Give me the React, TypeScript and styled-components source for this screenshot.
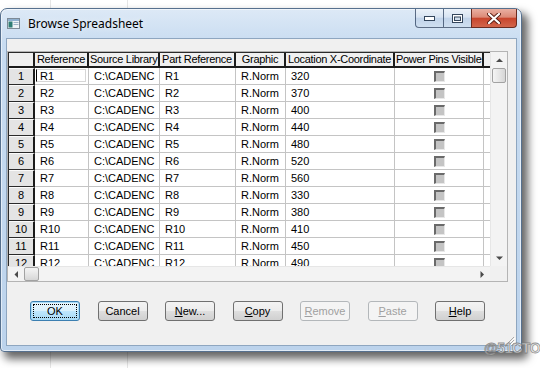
import React from 'react';
import styled, { createGlobalStyle, css } from 'styled-components';

const GlobalStyle = createGlobalStyle`
  html, body {
    margin: 0;
    padding: 0;
    background: #fff;
  }
  body {
    font-family: 'Liberation Sans', Arial, sans-serif;
  }
`;

const Desktop = styled.div`
  position: relative;
  width: 540px;
  height: 368px;
  overflow: hidden;
  box-sizing: border-box;
  padding-top: 8px;
  background-color: #fff;
  background-image: linear-gradient(#e6e6e6, #e6e6e6), linear-gradient(#e6e6e6, #e6e6e6);
  background-size: 1px 100%, 1px 100%;
  background-position: 50px 0, 127px 0;
  background-repeat: no-repeat;
`;

const Window = styled.div`
  width: 522px;
  height: 344px;
  box-sizing: border-box;
  display: flex;
  flex-direction: column;
  border: 1px solid #56708e;
  border-radius: 7px 7px 4px 4px;
  background: linear-gradient(180deg, #dde9f6 0%, #c8dcf1 10%, #bcd3ec 100%);
  box-shadow: 5px 6px 9px 1px rgba(0, 0, 0, 0.6), inset 0 0 0 1px rgba(255, 255, 255, 0.55);
`;

const TitleBar = styled.div`
  height: 29px;
  display: flex;
  align-items: center;
  padding-left: 6px;
`;

const TitleText = styled.span`
  margin-left: 8px;
  font-family: 'Noto Sans', 'Liberation Sans', sans-serif;
  font-size: 12px;
  color: #000;
  text-shadow: 0 0 6px rgba(255, 255, 255, 0.9);
`;

const CaptionGroup = styled.div`
  margin-left: auto;
  margin-right: 4px;
  align-self: flex-start;
  display: flex;
`;

const CaptionButton = styled.div<{ $kind: 'min' | 'max' | 'close' }>`
  height: 19px;
  box-sizing: border-box;
  display: flex;
  align-items: center;
  justify-content: center;
  border: 1px solid rgba(45, 65, 95, 0.75);
  border-top: none;
  ${(p) =>
    p.$kind === 'close'
      ? css`
          width: 46px;
          border-color: #6b2b1f;
          border-bottom-right-radius: 4px;
          background: linear-gradient(180deg, #eab0a2 0%, #dc8a77 45%, #c8462d 52%, #d2654b 100%);
        `
      : css`
          width: 28px;
          border-right: none;
          background: linear-gradient(180deg, #ecf2f9 0%, #d8e4f2 45%, #c2d4ea 52%, #cfdff0 100%);
        `}
  ${(p) =>
    p.$kind === 'min' &&
    css`
      border-bottom-left-radius: 4px;
    `}
`;

const Client = styled.div`
  position: relative;
  flex: 1;
  margin: 0 4px 5px 5px;
  border: 1px solid #8ea6c0;
  background: #f0f0f0;
  padding-top: 12px;
  display: flex;
  flex-direction: column;
`;

const GridFrame = styled.div`
  width: 501px;
  box-sizing: border-box;
  border: 1px solid #b4b4b4;
  display: flex;
  flex-direction: column;
`;

const GridBand = styled.div<{ $h: number }>`
  display: flex;
  height: ${(p) => p.$h}px;
`;

const Viewport = styled.div`
  width: 482px;
  height: 214px;
  box-sizing: border-box;
  border-top: 1px solid #2a2a2a;
  border-left: 1px solid #2a2a2a;
  background: #fff;
  overflow: hidden;
`;

const Row = styled.div<{ $header?: boolean }>`
  display: flex;
  height: ${(p) => (p.$header ? 15 : 17)}px;
  white-space: nowrap;
`;

const HeaderCell = styled.div<{ $w: number }>`
  flex: 0 0 ${(p) => p.$w}px;
  box-sizing: border-box;
  overflow: hidden;
  background: #f0f0f0;
  border-right: 2px solid #1c1c1c;
  border-bottom: 2px solid #1c1c1c;
  font-size: 11px;
  letter-spacing: -0.3px;
  line-height: 13px;
  text-align: center;
  padding: 0 1px;
  color: #000;
`;

const RowHead = styled.div`
  flex: 0 0 26px;
  box-sizing: border-box;
  background: #e4e4e4;
  border-top: 1px solid #fbfbfb;
  border-right: 2px solid #1c1c1c;
  border-bottom: 1px solid #2a2a2a;
  font-size: 11px;
  line-height: 15px;
  text-align: center;
  color: #000;
`;

const Cell = styled.div<{ $w: number; $center?: boolean; $focused?: boolean }>`
  position: relative;
  flex: 0 0 ${(p) => p.$w}px;
  box-sizing: border-box;
  overflow: hidden;
  border-right: 1px solid #c4c4c4;
  border-bottom: 1px solid #c4c4c4;
  font-size: 11px;
  line-height: 16px;
  padding-left: 5px;
  color: #000;
  ${(p) =>
    p.$center &&
    css`
      display: flex;
      align-items: center;
      justify-content: center;
      padding-left: 0;
    `}
  ${(p) =>
    p.$focused &&
    css`
      &::before {
        content: '';
        position: absolute;
        top: 1px;
        left: 1px;
        right: 2px;
        bottom: 2px;
        border: 1px solid #d6d6d6;
        border-left: 1px solid #000;
      }
    `}
`;

const CheckBox = styled.div`
  width: 11px;
  height: 11px;
  box-sizing: border-box;
  background: #c4c4c4;
  border-top: 2px solid #6a6a6a;
  border-left: 2px solid #6a6a6a;
  border-right: 1px solid #e8e8e8;
  border-bottom: 1px solid #e8e8e8;
`;

const VScroll = styled.div`
  width: 17px;
  height: 214px;
  display: flex;
  flex-direction: column;
  background: #f3f3f3;
  border-left: 1px solid #e6e6e6;
  box-sizing: border-box;
`;

const HScroll = styled.div`
  width: 482px;
  height: 15px;
  display: flex;
  background: #f3f3f3;
  border-top: 1px solid #e6e6e6;
  box-sizing: border-box;
`;

const Corner = styled.div`
  width: 17px;
  height: 15px;
  background: #f0f0f0;
`;

const ArrowBox = styled.div`
  flex: 0 0 16px;
  display: flex;
  align-items: center;
  justify-content: center;
`;

const Spacer = styled.div`
  flex: 1;
`;

const Thumb = styled.div<{ $vertical?: boolean }>`
  box-sizing: border-box;
  border: 1px solid #a2a2a2;
  border-radius: 2px;
  ${(p) =>
    p.$vertical
      ? css`
          height: 15px;
          margin: 0 1px;
          background: linear-gradient(90deg, #f4f4f4 0%, #e6e6e6 50%, #d6d6d6 100%);
        `
      : css`
          width: 15px;
          background: linear-gradient(180deg, #f4f4f4 0%, #e6e6e6 50%, #d6d6d6 100%);
        `}
`;

const ButtonRow = styled.div`
  display: flex;
  gap: 17.5px;
  margin-top: 19px;
  padding-left: 23px;
`;

const Button = styled.div<{ $default?: boolean; $disabled?: boolean }>`
  position: relative;
  width: 50px;
  height: 20px;
  box-sizing: border-box;
  display: flex;
  align-items: center;
  justify-content: center;
  border: 1px solid #707070;
  border-radius: 3px;
  background: linear-gradient(180deg, #f3f3f3 0%, #ececec 48%, #dedede 52%, #d0d0d0 100%);
  font-size: 11px;
  color: #000;
  ${(p) =>
    p.$default &&
    css`
      border-color: #3c7fb1;
      box-shadow: inset 0 0 0 1px #a9dbf6;
      background: linear-gradient(180deg, #eaf6fd 0%, #d9f0fc 48%, #bee6fd 52%, #a7d9f5 100%);
      &::after {
        content: '';
        position: absolute;
        inset: 2px;
        border: 1px dotted #000;
      }
    `}
  ${(p) =>
    p.$disabled &&
    css`
      color: #a0a0a0;
      border-color: #b3b7ba;
      background: #f4f4f4;
    `}
`;

const Grip = styled.div`
  position: absolute;
  right: 1px;
  bottom: 1px;
  width: 12px;
  height: 12px;
`;

const Watermark = styled.div`
  position: absolute;
  left: 484px;
  top: 337px;
  white-space: nowrap;
  font-family: 'Liberation Sans', 'Noto Sans CJK SC', sans-serif;
  font-size: 14px;
  font-weight: bold;
  color: rgba(235, 235, 235, 0.75);
  -webkit-text-stroke: 0.8px rgba(120, 120, 120, 0.8);
  letter-spacing: -0.4px;
`;

const widths = [26, 54, 71, 76, 50, 109, 89, 80];
const headers = ['', 'Reference', 'Source Library', 'Part Reference', 'Graphic', 'Location X-Coordinate', 'Power Pins Visible', 'Designator'];
const xs = [320, 370, 400, 440, 480, 520, 560, 330, 380, 410, 450, 490];

const Tri: React.FC<{ dir: 'up' | 'down' | 'left' | 'right' }> = ({ dir }) => {
  const pts = {
    up: '0,4 3.5,0.5 7,4',
    down: '0,0.5 7,0.5 3.5,4',
    left: '4,0 4,7 0.5,3.5',
    right: '0.5,0 0.5,7 4,3.5',
  }[dir];
  const vertical = dir === 'up' || dir === 'down';
  return (
    <svg width={vertical ? 7 : 5} height={vertical ? 5 : 7} viewBox={vertical ? '0 0 7 5' : '0 0 5 7'}>
      <polygon points={pts} fill="#4a4a4a" />
    </svg>
  );
};

const AppIcon = () => (
  <svg width="13" height="11" viewBox="0 0 13 11">
    <rect x="0.5" y="0.5" width="12" height="10" fill="#eef3f7" stroke="#7d8a96" />
    <rect x="1" y="1" width="11" height="2" fill="#8fb0cf" />
    <rect x="1.5" y="3.5" width="4" height="6" fill="#2f7d74" />
    <rect x="6.5" y="4" width="5" height="1" fill="#9fb5c8" />
    <rect x="6.5" y="6" width="5" height="1" fill="#9fb5c8" />
  </svg>
);

const App: React.FC = () => {
  return (
    <Desktop>
      <GlobalStyle />
      <Window>
        <TitleBar>
          <AppIcon />
          <TitleText>Browse Spreadsheet</TitleText>
          <CaptionGroup>
            <CaptionButton $kind="min">
              <svg width="11" height="5" viewBox="0 0 11 5">
                <rect x="0.5" y="0.5" width="10" height="4" fill="#fff" stroke="#34465c" />
              </svg>
            </CaptionButton>
            <CaptionButton $kind="max">
              <svg width="11" height="9" viewBox="0 0 11 9">
                <rect x="0.5" y="0.5" width="10" height="8" fill="#fff" stroke="#34465c" />
                <rect x="2.5" y="3" width="6" height="3.5" fill="#cfdcea" stroke="#34465c" />
              </svg>
            </CaptionButton>
            <CaptionButton $kind="close">
              <svg width="14" height="11" viewBox="0 0 14 11">
                <path d="M2 1 L12 10 M12 1 L2 10" stroke="#5a1e14" strokeWidth="4" strokeLinecap="round" />
                <path d="M2 1 L12 10 M12 1 L2 10" stroke="#fff" strokeWidth="2.2" strokeLinecap="round" />
              </svg>
            </CaptionButton>
          </CaptionGroup>
        </TitleBar>
        <Client>
          <GridFrame>
            <GridBand $h={214}>
              <Viewport>
                <Row $header>
                  {headers.map((h, i) => (
                    <HeaderCell key={i} $w={widths[i]}>
                      {h}
                    </HeaderCell>
                  ))}
                </Row>
                {xs.map((x, r) => (
                  <Row key={r}>
                    <RowHead>{r + 1}</RowHead>
                    <Cell $w={widths[1]} $focused={r === 0}>
                      R{r + 1}
                    </Cell>
                    <Cell $w={widths[2]}>C:\CADENC</Cell>
                    <Cell $w={widths[3]}>R{r + 1}</Cell>
                    <Cell $w={widths[4]}>R.Norm</Cell>
                    <Cell $w={widths[5]}>{x}</Cell>
                    <Cell $w={widths[6]} $center>
                      <CheckBox />
                    </Cell>
                    <Cell $w={widths[7]}></Cell>
                  </Row>
                ))}
              </Viewport>
              <VScroll>
                <ArrowBox>
                  <Tri dir="up" />
                </ArrowBox>
                <Thumb $vertical />
                <Spacer />
                <ArrowBox>
                  <Tri dir="down" />
                </ArrowBox>
              </VScroll>
            </GridBand>
            <GridBand $h={15}>
              <HScroll>
                <ArrowBox>
                  <Tri dir="left" />
                </ArrowBox>
                <Thumb />
                <Spacer />
                <ArrowBox>
                  <Tri dir="right" />
                </ArrowBox>
              </HScroll>
              <Corner />
            </GridBand>
          </GridFrame>
          <ButtonRow>
            <Button $default>OK</Button>
            <Button>Cancel</Button>
            <Button>
              <span>
                <u>N</u>ew...
              </span>
            </Button>
            <Button>
              <span>
                <u>C</u>opy
              </span>
            </Button>
            <Button $disabled>
              <span>
                <u>R</u>emove
              </span>
            </Button>
            <Button $disabled>
              <span>
                <u>P</u>aste
              </span>
            </Button>
            <Button>
              <span>
                <u>H</u>elp
              </span>
            </Button>
          </ButtonRow>
          <Grip>
            <svg width="12" height="12" viewBox="0 0 12 12">
              <path d="M11 3 L3 11 M11 6 L6 11 M11 9 L9 11" stroke="#a8a8a8" strokeWidth="1" />
              <path d="M12 4 L4 12 M12 7 L7 12 M12 10 L10 12" stroke="#fff" strokeWidth="1" />
            </svg>
          </Grip>
        </Client>
      </Window>
      <Watermark>@51CTO博客</Watermark>
    </Desktop>
  );
};

export default App;
